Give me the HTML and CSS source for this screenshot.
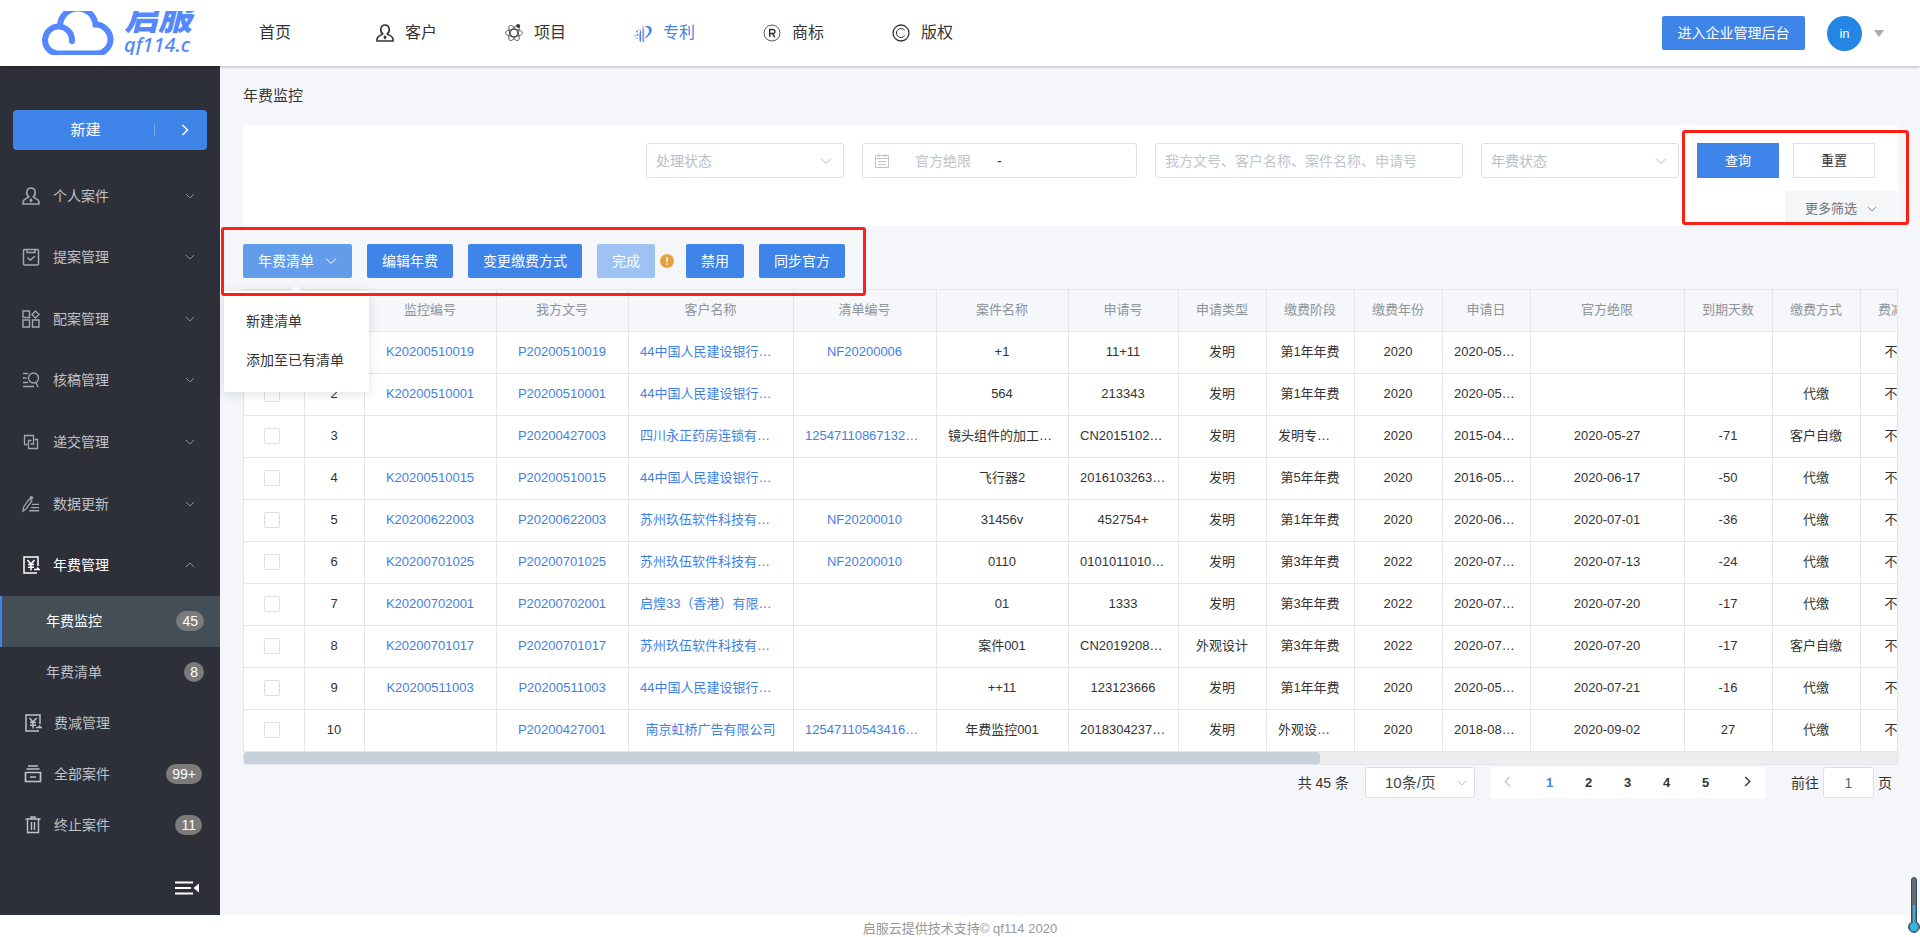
FILE: index.html
```html
<!DOCTYPE html>
<html lang="zh-CN">
<head>
<meta charset="utf-8">
<title>年费监控</title>
<link rel="stylesheet" href="styles.css">
</head>
<body>
<svg class="sprite" aria-hidden="true">
  <symbol id="down" viewBox="0 0 12 12"><path d="M1 3.500l5 5 5-5" fill="none" stroke="currentColor"/></symbol>
  <symbol id="up" viewBox="0 0 12 12"><path d="M1 8.500l5-5 5 5" fill="none" stroke="currentColor"/></symbol>
  <symbol id="left" viewBox="0 0 12 12"><path d="M8.500 1l-5 5 5 5" fill="none" stroke="currentColor" stroke-width="1.500"/></symbol>
  <symbol id="right" viewBox="0 0 12 12"><path d="M3.500 1l5 5-5 5" fill="none" stroke="currentColor" stroke-width="1.500"/></symbol>
  <symbol id="person" viewBox="0 0 18 18"><g fill="none" stroke="currentColor" stroke-width="1.600"><path d="M6.800 9.800C3.500 7.500 4.200 1 9 1s5.500 6.500 2.200 8.800c.5 1.500 5.300 1.500 5.800 5.200v2H1v-2c.5-3.700 5.300-3.700 5.800-5.200z"/></g><path d="M9 11l1.700 2.200L9 15.800l-1.700-2.600z" fill="currentColor"/></symbol>
  <symbol id="clip" viewBox="0 0 18 18"><g fill="none" stroke="currentColor" stroke-width="1.500"><rect x="1.500" y="1.500" width="15" height="15.500" rx="1"/><path d="M5 1v3.500h8V1M5.500 9.500l2.800 2.800 4.500-4.300"/></g></symbol>
  <symbol id="blocks" viewBox="0 0 18 18"><g fill="none" stroke="currentColor" stroke-width="1.400"><path d="M1 1h6.500v6.500H1zM1 10h6.500v7H1zM10.500 10H17v7h-6.500zM13.500 1l3.500 3.500L13.500 8 10 4.500z"/></g></symbol>
  <symbol id="review" viewBox="0 0 18 18"><g fill="none" stroke="currentColor" stroke-width="1.300"><circle cx="11.500" cy="7" r="5"/><path d="M14 11.500l2 4.500M1 2.500h5M1 7h3.500M1 11.500h5M1 15.500h11"/></g></symbol>
  <symbol id="submit" viewBox="0 0 18 18"><g fill="none" stroke="currentColor" stroke-width="1.300"><path d="M5.500 11.500H2.500v-9h9v8.500H8.500M12.500 6.500h3v9h-9V7.500h3"/></g></symbol>
  <symbol id="pencil" viewBox="0 0 20 18"><g fill="none" stroke="currentColor" stroke-width="1.400"><path d="M1 17l1-5L8 3.500l3 2L4.500 14.500zM11 9.500h8M10 13h9M8 16.500h11"/></g><circle cx="10.500" cy="2" r="1.900" fill="currentColor"/></symbol>
  <symbol id="fee" viewBox="0 0 18 18"><g fill="none" stroke="currentColor" stroke-width="1.500"><path d="M16 10V1H2v16h13"/><path d="M5.500 4L9 8l3.500-4M9 8v6.500M6 8.500h6M6 11.300h6M12 13.500h5l-2-2"/></g></symbol>
  <symbol id="archive" viewBox="0 0 18 18"><g fill="none" stroke="currentColor" stroke-width="1.700"><path d="M4 1h10M2.500 4h13M1.500 7.500h15v9h-15zM6 12h6"/></g></symbol>
  <symbol id="trash" viewBox="0 0 18 18"><g fill="none" stroke="currentColor" stroke-width="1.400"><path d="M1.500 3h15M7 3V1h4v2M3.500 3v13.500h11V3M7.500 6v8M10.500 6v8"/></g></symbol>
  <symbol id="atom" viewBox="0 0 18 18"><g fill="none" stroke="currentColor" stroke-width=".7"><circle cx="9" cy="9" r="4.200"/><ellipse cx="9" cy="9" rx="8.500" ry="3.600"/><ellipse cx="9" cy="9" rx="8.500" ry="3.600" transform="rotate(60 9 9)"/><ellipse cx="9" cy="9" rx="8.500" ry="3.600" transform="rotate(120 9 9)"/></g><circle cx="13.200" cy="1.900" r="1.900" fill="currentColor"/></symbol>
  <symbol id="patent" viewBox="0 0 18 18"><path d="M9 0l1.200 7v11H8.300V7z" fill="#a08be6"/><path d="M7 5v13l-1.500-1V9z" fill="currentColor"/><path d="M11.500 2.500C20 .5 18.500 11 11.500 13.500c4.500-4 6-9.500 0-11z" fill="currentColor" stroke="currentColor" stroke-width=".8"/><g fill="currentColor"><circle cx="3" cy="7.500" r=".9"/><circle cx="1" cy="11.500" r=".7"/><circle cx="3.500" cy="11" r=".9"/><circle cx="3" cy="14" r=".7"/><circle cx="5" cy="6" r=".6"/></g></symbol>
  <symbol id="reg" viewBox="0 0 18 18"><g fill="none" stroke="currentColor"><circle cx="9" cy="9" r="8" stroke-width=".8"/><path d="M6.700 13V5.500h3.200a2 2 0 010 4H6.700M9.500 9.500l2.300 3.500" stroke-width="1.400"/></g></symbol>
  <symbol id="copy" viewBox="0 0 18 18"><g fill="none" stroke="currentColor" stroke-width="1.300"><circle cx="9" cy="9" r="8"/><path d="M12.700 6.500a4.500 4.500 0 100 5" stroke-width="1"/></g></symbol>
</svg>

<header class="topbar">
  <a class="logo" href="#">
    <svg viewBox="42 11 72 44" aria-hidden="true"><g fill="none" stroke="#5588ff" stroke-width="6" stroke-linecap="round"><path d="M72 41A13.500 13.500 0 1 0 57 53.500H97C104 53.500 110.500 47 110.500 39.500C110.500 31 103 24.500 95.500 24.500C94 14 86 8.500 78 8.500C69 8.500 60.500 15 60 26"/></g></svg>
    <span class="logo-text"><b>启服</b><i>qf114.c</i></span>
  </a>
  <nav class="nav">
    <a href="#">首页</a>
    <a href="#"><svg><use href="#person"/></svg>客户</a>
    <a href="#"><svg><use href="#atom"/></svg>项目</a>
    <a href="#" class="on"><svg><use href="#patent"/></svg>专利</a>
    <a href="#"><svg><use href="#reg"/></svg>商标</a>
    <a href="#"><svg><use href="#copy"/></svg>版权</a>
  </nav>
  <div class="account">
    <button class="btn admin">进入企业管理后台</button>
    <span class="avatar">in</span>
    <span class="caret"></span>
  </div>
</header>

<div class="app">
  <aside class="sidebar">
    <button class="create"><span>新建</span><svg><use href="#right"/></svg></button>
    <nav class="menu">
      <a href="#"><svg><use href="#person"/></svg>个人案件<svg class="arr"><use href="#down"/></svg></a>
      <a href="#"><svg><use href="#clip"/></svg>提案管理<svg class="arr"><use href="#down"/></svg></a>
      <a href="#"><svg><use href="#blocks"/></svg>配案管理<svg class="arr"><use href="#down"/></svg></a>
      <a href="#"><svg><use href="#review"/></svg>核稿管理<svg class="arr"><use href="#down"/></svg></a>
      <a href="#"><svg><use href="#submit"/></svg>递交管理<svg class="arr"><use href="#down"/></svg></a>
      <a href="#"><svg><use href="#pencil"/></svg>数据更新<svg class="arr"><use href="#down"/></svg></a>
      <a href="#" class="open"><svg><use href="#fee"/></svg>年费管理<svg class="arr"><use href="#up"/></svg></a>
    </nav>
    <nav class="submenu">
      <a href="#" class="sub active">年费监控<span class="badge">45</span></a>
      <a href="#" class="sub">年费清单<span class="badge">8</span></a>
      <a href="#"><svg><use href="#fee"/></svg>费减管理</a>
      <a href="#"><svg><use href="#archive"/></svg>全部案件<span class="badge">99+</span></a>
      <a href="#"><svg><use href="#trash"/></svg>终止案件<span class="badge">11</span></a>
    </nav>
    <button class="collapse" aria-label="收起菜单"><svg viewBox="0 0 24 14"><path d="M0 1.500h18M0 7h16M0 12.500h18" stroke="#fff" stroke-width="2"/><path d="M24 2.500v9L18.500 7z" fill="#fff"/></svg></button>
  </aside>

  <main class="main">
    <h1>年费监控</h1>
    <section class="filters">
      <form class="filter-row">
        <label class="pick"><select aria-label="处理状态"><option>处理状态</option></select><svg><use href="#down"/></svg></label>
        <div class="dates">
          <svg viewBox="0 0 14 14"><path d="M.5 1.500h13v12H.5zM.5 4.500h13M4 0v3M10 0v3M3 7.500h8M3 10.500h8" fill="none" stroke="currentColor"/></svg>
          <input type="text" placeholder="官方绝限" aria-label="官方绝限开始"><span>-</span><input type="text" aria-label="官方绝限结束">
        </div>
        <input class="words" type="text" placeholder="我方文号、客户名称、案件名称、申请号" aria-label="关键词">
        <label class="pick"><select aria-label="年费状态"><option>年费状态</option></select><svg><use href="#down"/></svg></label>
        <div class="actions"><button type="button" class="btn query">查询</button><button type="button" class="btn reset">重置</button></div>
      </form>
      <button class="more">更多筛选<svg><use href="#down"/></svg></button>
      <span class="mark mark-query"></span>
    </section>

    <section class="toolbar">
      <div class="drop">
        <button class="btn lit">年费清单<svg><use href="#down"/></svg></button>
        <div class="drop-menu"><a href="#">新建清单</a><a href="#">添加至已有清单</a></div>
      </div>
      <button class="btn">编辑年费</button>
      <button class="btn">变更缴费方式</button>
      <div class="done"><button class="btn" disabled>完成</button><svg viewBox="0 0 14 14"><circle cx="7" cy="7" r="7" fill="#e6a23c"/><path d="M7 3v5M7 9.500v1.500" stroke="#fff" stroke-width="1.500"/></svg></div>
      <button class="btn">禁用</button>
      <button class="btn">同步官方</button>
      <span class="mark mark-tools"></span>
    </section>

    <div class="grid">
      <table>
        <colgroup><col class="w61"><col class="w60"><col class="w132"><col class="w132"><col class="w165"><col class="w143"><col class="w132"><col class="w110"><col class="w88"><col class="w88"><col class="w88"><col class="w88"><col class="w154"><col class="w88"><col class="w88"><col class="w88"></colgroup>
        <thead><tr><th><input type="checkbox" aria-label="全选"></th><th></th><th>监控编号</th><th>我方文号</th><th>客户名称</th><th>清单编号</th><th>案件名称</th><th>申请号</th><th>申请类型</th><th>缴费阶段</th><th>缴费年份</th><th>申请日</th><th>官方绝限</th><th>到期天数</th><th>缴费方式</th><th>费减状态</th></tr></thead>
        <tbody>
          <tr><td><input type="checkbox" aria-label="选择1"></td><td>1</td><td><a href="#">K20200510019</a></td><td><a href="#">P20200510019</a></td><td class="cut"><a href="#">44中国人民建设银行…</a></td><td><a href="#">NF20200006</a></td><td>+1</td><td>11+11</td><td>发明</td><td>第1年年费</td><td>2020</td><td class="cut">2020-05…</td><td></td><td></td><td></td><td>不费减</td></tr>
          <tr><td><input type="checkbox" aria-label="选择2"></td><td>2</td><td><a href="#">K20200510001</a></td><td><a href="#">P20200510001</a></td><td class="cut"><a href="#">44中国人民建设银行…</a></td><td></td><td>564</td><td>213343</td><td>发明</td><td>第1年年费</td><td>2020</td><td class="cut">2020-05…</td><td></td><td></td><td>代缴</td><td>不费减</td></tr>
          <tr><td><input type="checkbox" aria-label="选择3"></td><td>3</td><td></td><td><a href="#">P20200427003</a></td><td class="cut"><a href="#">四川永正药房连锁有…</a></td><td class="cut"><a href="#">12547110867132…</a></td><td class="cut">镜头组件的加工…</td><td class="cut">CN2015102…</td><td>发明</td><td class="cut">发明专…</td><td>2020</td><td class="cut">2015-04…</td><td>2020-05-27</td><td>-71</td><td>客户自缴</td><td>不费减</td></tr>
          <tr><td><input type="checkbox" aria-label="选择4"></td><td>4</td><td><a href="#">K20200510015</a></td><td><a href="#">P20200510015</a></td><td class="cut"><a href="#">44中国人民建设银行…</a></td><td></td><td>飞行器2</td><td class="cut">2016103263…</td><td>发明</td><td>第5年年费</td><td>2020</td><td class="cut">2016-05…</td><td>2020-06-17</td><td>-50</td><td>代缴</td><td>不费减</td></tr>
          <tr><td><input type="checkbox" aria-label="选择5"></td><td>5</td><td><a href="#">K20200622003</a></td><td><a href="#">P20200622003</a></td><td class="cut"><a href="#">苏州玖伍软件科技有…</a></td><td><a href="#">NF20200010</a></td><td>31456v</td><td>452754+</td><td>发明</td><td>第1年年费</td><td>2020</td><td class="cut">2020-06…</td><td>2020-07-01</td><td>-36</td><td>代缴</td><td>不费减</td></tr>
          <tr><td><input type="checkbox" aria-label="选择6"></td><td>6</td><td><a href="#">K20200701025</a></td><td><a href="#">P20200701025</a></td><td class="cut"><a href="#">苏州玖伍软件科技有…</a></td><td><a href="#">NF20200010</a></td><td>0110</td><td class="cut">0101011010…</td><td>发明</td><td>第3年年费</td><td>2022</td><td class="cut">2020-07…</td><td>2020-07-13</td><td>-24</td><td>代缴</td><td>不费减</td></tr>
          <tr><td><input type="checkbox" aria-label="选择7"></td><td>7</td><td><a href="#">K20200702001</a></td><td><a href="#">P20200702001</a></td><td class="cut"><a href="#">启煌33（香港）有限…</a></td><td></td><td>01</td><td>1333</td><td>发明</td><td>第3年年费</td><td>2022</td><td class="cut">2020-07…</td><td>2020-07-20</td><td>-17</td><td>代缴</td><td>不费减</td></tr>
          <tr><td><input type="checkbox" aria-label="选择8"></td><td>8</td><td><a href="#">K20200701017</a></td><td><a href="#">P20200701017</a></td><td class="cut"><a href="#">苏州玖伍软件科技有…</a></td><td></td><td>案件001</td><td class="cut">CN2019208…</td><td>外观设计</td><td>第3年年费</td><td>2022</td><td class="cut">2020-07…</td><td>2020-07-20</td><td>-17</td><td>客户自缴</td><td>不费减</td></tr>
          <tr><td><input type="checkbox" aria-label="选择9"></td><td>9</td><td><a href="#">K20200511003</a></td><td><a href="#">P20200511003</a></td><td class="cut"><a href="#">44中国人民建设银行…</a></td><td></td><td>++11</td><td>123123666</td><td>发明</td><td>第1年年费</td><td>2020</td><td class="cut">2020-05…</td><td>2020-07-21</td><td>-16</td><td>代缴</td><td>不费减</td></tr>
          <tr><td><input type="checkbox" aria-label="选择10"></td><td>10</td><td></td><td><a href="#">P20200427001</a></td><td><a href="#">南京虹桥广告有限公司</a></td><td class="cut"><a href="#">12547110543416…</a></td><td>年费监控001</td><td class="cut">2018304237…</td><td>发明</td><td class="cut">外观设…</td><td>2020</td><td class="cut">2018-08…</td><td>2020-09-02</td><td>27</td><td>代缴</td><td>不费减</td></tr>
        </tbody>
      </table>
      <div class="scroll"><div class="thumb"></div></div>
    </div>

    <div class="pagination">
      <span class="total">共 45 条</span>
      <label class="pick size"><select aria-label="每页条数"><option>10条/页</option></select><svg><use href="#down"/></svg></label>
      <div class="pager">
        <button class="off" aria-label="上一页"><svg><use href="#left"/></svg></button>
        <button class="now">1</button><button>2</button><button>3</button><button>4</button><button>5</button>
        <button class="next" aria-label="下一页"><svg><use href="#right"/></svg></button>
      </div>
      <label class="jump">前往<input type="text" value="1">页</label>
    </div>
  </main>
</div>
<footer class="footer">启服云提供技术支持© qf114 2020</footer>
<svg class="thermo" viewBox="0 0 12 56" aria-hidden="true"><path d="M3.500 3a2.500 2.500 0 015 0v42a5.500 5.500 0 11-5 0z" fill="#5f707c" stroke="#3d4a54"/><path d="M6 28v20" stroke="#2fb0e6" stroke-width="2"/><circle cx="6" cy="50" r="4" fill="#2fb7e8"/></svg>
</body>
</html>
```

FILE: styles.css
```css
* { box-sizing: border-box; }
body {
  margin: 0;
  min-height: 100vh;
  display: flex;
  flex-direction: column;
  overflow: hidden;
  position: relative;
  font: 14px/20px "Liberation Sans", "Noto Sans CJK SC", sans-serif;
  color: #333;
  background: #fff;
}
a { color: inherit; text-decoration: none; }
button, input, select { font: inherit; color: inherit; margin: 0; }
button { border: 0; padding: 0; background: none; cursor: pointer; }
svg { flex: none; }
.sprite { position: absolute; width: 0; height: 0; }

.topbar {
  height: 66px;
  display: flex;
  align-items: center;
  background: #fff;
  box-shadow: 0 1px 3px rgba(0, 0, 0, .25);
  position: relative;
  z-index: 2;
}
.logo {
  width: 154px;
  height: 44px;
  margin-left: 42px;
  display: flex;
  gap: 10px;
  overflow: hidden;
}
.logo > svg { width: 72px; height: 44px; }
.logo-text {
  display: flex;
  flex-direction: column;
  justify-content: flex-end;
  color: #5588ff;
  white-space: nowrap;
}
.logo-text b { font: italic 900 34px/34px "Noto Sans CJK SC", sans-serif; margin-bottom: 2px; }
.logo-text i { font: italic 500 20px/20px "Noto Sans", sans-serif; }
.nav { display: flex; margin-left: 63px; font-size: 16px; flex: 1; }
.nav a { width: 129px; display: flex; align-items: center; gap: 11px; }
.nav a:first-child { width: 117px; }
.nav svg { width: 18px; height: 18px; }
.nav .on { color: #3f84e9; }
.account { display: flex; align-items: center; padding-right: 36px; }
.btn {
  height: 34px;
  padding: 0 15px;
  border-radius: 2px;
  background: #3f84e9;
  color: #fff;
  white-space: nowrap;
}
.account .admin { width: 143px; }
.avatar {
  width: 35px;
  height: 35px;
  margin: 0 12px 0 22px;
  border-radius: 50%;
  background: #2486e4;
  color: #fff;
  font-size: 13px;
  line-height: 35px;
  text-align: center;
}
.caret { border: 5px solid transparent; border-top: 7px solid #aaa; border-bottom: 0; }

.app { flex: 1; display: flex; }
.sidebar {
  width: 220px;
  flex: none;
  padding-top: 44px;
  background: #2d3038;
  color: #bfc2c7;
  display: flex;
  flex-direction: column;
}
.create {
  height: 40px;
  margin: 0 13px;
  border-radius: 4px;
  background: #3f84e9;
  color: #fff;
  font-size: 15px;
  display: flex;
  align-items: center;
}
.create span { flex: 1; padding-left: 4px; line-height: 12px; border-right: 1px solid #78a9f0; margin-right: 24px; }
.create svg { width: 12px; height: 12px; margin-right: 16px; }
.menu { height: 431px; margin-top: 15px; display: grid; grid-auto-rows: 1fr; }
.menu a { display: flex; align-items: center; gap: 13px; padding: 0 25px 0 22px; }
.menu svg { width: 18px; height: 18px; color: #a3a7ad; }
.menu .arr { width: 10px; height: 10px; margin-left: auto; }
.menu .open, .menu .open svg:first-child { color: #fff; }
.submenu a {
  height: 51px;
  display: flex;
  align-items: center;
  gap: 12px;
  padding: 0 18px 2px 24px;
}
.submenu .sub { padding: 0 16px 2px 44px; border-left: 2px solid transparent; }
.submenu .active { background: #444e57; border-color: #3f84e9; color: #fff; }
.submenu svg { width: 18px; height: 18px; }
.badge {
  margin-left: auto;
  padding: 0 6px;
  border-radius: 10px;
  background: #7b7b7b;
  color: #fff;
}
.collapse { margin: 30px 21px 0 auto; }
.collapse svg { width: 24px; height: 14px; display: block; }

.main { flex: 1; min-width: 0; padding: 0 22px 0 23px; background: #f4f6fa; }
h1 { margin: 0; font-size: 15px; font-weight: 400; line-height: 59px; }
.filters { background: #fff; padding: 18px 0 0; position: relative; }
.filter-row { display: flex; justify-content: flex-end; gap: 18px; padding-right: 23px; }
.pick { position: relative; width: 198px; height: 35px; }
.pick select, .dates, .words {
  width: 100%;
  height: 35px;
  padding: 0 9px;
  border: 1px solid #dcdfe6;
  border-radius: 3px;
  background: #fff;
  color: #b8bdc7;
  appearance: none;
}
.pick svg { position: absolute; right: 12px; top: 12px; width: 12px; height: 12px; color: #b4b8c0; }
::placeholder { color: #c0c4cc; opacity: 1; }
.filter-row .dates { width: 275px; padding-left: 12px; display: flex; align-items: center; color: #333; }
.dates svg { width: 14px; height: 14px; color: #c0c4cc; }
.dates input { width: 82px; border: 0; padding: 0; margin-left: 26px; background: none; }
.dates input:last-child { margin-left: 10px; }
.filter-row .words { width: 308px; }
.actions { display: flex; gap: 14px; }
.actions .btn { width: 82px; height: 35px; font-size: 13px; border-radius: 0; }
.actions .reset { background: #fff; border: 1px solid #dcdfe6; color: #333; }
.more {
  width: 112px;
  height: 35px;
  margin: 13px 1px 0 auto;
  background: #f4f6f8;
  color: #6b7580;
  font-size: 13px;
  display: flex;
  align-items: center;
  justify-content: center;
  gap: 10px;
}
.more svg { width: 10px; height: 10px; }
.mark { position: absolute; border: 3px solid #ff2015; border-radius: 3px; z-index: 5; pointer-events: none; }
.mark-query { top: 5px; bottom: 1px; right: -11px; width: 227px; }
.mark-tools { top: 1px; bottom: -7px; left: -22px; width: 645px; }

.toolbar { display: flex; gap: 15px; padding: 18px 0 11px; position: relative; }
.drop { position: relative; }
.lit { display: flex; align-items: center; gap: 11px; background: #649cec; }
.lit svg { width: 12px; height: 12px; }
.done { display: flex; align-items: center; gap: 5px; margin-right: -3px; }
.done .btn { background: #9fc2f4; }
.done svg { width: 14px; height: 14px; }
.drop-menu {
  position: absolute;
  z-index: 3;
  top: 47px;
  left: -19px;
  width: 145px;
  padding: 11px 0 12px;
  background: #fff;
  border-radius: 2px;
  box-shadow: 0 2px 12px rgba(0, 0, 0, .12);
}
.drop-menu::before {
  content: "";
  position: absolute;
  left: 67px;
  top: -5px;
  border: 5px solid transparent;
  border-top: 0;
  border-bottom-color: #fff;
}
.drop-menu a { display: block; padding-left: 22px; line-height: 39px; }

.grid { border: 1px solid #e4e6ea; overflow: hidden; font-size: 13px; }
table { width: 1705px; table-layout: fixed; border-spacing: 0; background: #fff; }
th, td {
  height: 42px;
  padding: 0 1px 1px 0;
  border-right: 1px solid #e4e6ea;
  border-bottom: 1px solid #e4e6ea;
  text-align: center;
  white-space: nowrap;
}
th { background: #f5f7fa; color: #909399; font-weight: 400; }
td a { color: #3f7fe6; }
td.cut { padding-left: 11px; text-align: left; }
td input, th input {
  appearance: none;
  display: block;
  width: 16px;
  height: 16px;
  margin: 0 auto 0 20px;
  border: 1px solid #dcdfe6;
  border-radius: 2px;
  background: #fff;
}
.w60 { width: 60px; }
.w61 { width: 61px; }
.w88 { width: 88px; }
.w110 { width: 110px; }
.w132 { width: 132px; }
.w143 { width: 143px; }
.w154 { width: 154px; }
.w165 { width: 165px; }
.scroll { height: 12px; background: #eee; }
.thumb { width: 65.1%; height: 12px; border-radius: 3px; background: #c7d1da; }

.pagination { display: flex; justify-content: flex-end; align-items: center; padding: 2px 6px 0 0; height: 33px; }
.size { width: 110px; height: 31px; margin: 0 16px; }
.size select { height: 31px; padding-left: 19px; color: #444; font-size: 15px; }
.size svg { top: 11px; right: 8px; width: 10px; height: 10px; }
.pager { width: 274px; height: 31px; background: #fff; display: flex; font-size: 13px; font-weight: 700; }
.pager button { width: 39px; }
.pager .off { color: #c0c4cc; padding-right: 6px; }
.pager .next { padding-left: 6px; }
.pager .now { color: #3f84e9; }
.pager svg { width: 11px; height: 11px; }
.jump { display: flex; align-items: center; gap: 4px; margin-left: 26px; }
.jump input { width: 51px; height: 31px; border: 1px solid #dcdfe6; border-radius: 3px; background: #fff; text-align: center; padding: 0; color: #606266; }

.footer { padding-top: 5px; font-size: 13px; line-height: 17px; text-align: center; color: #999; }
.thermo { position: absolute; right: 0; bottom: 4px; width: 12px; height: 56px; z-index: 3; }
```
